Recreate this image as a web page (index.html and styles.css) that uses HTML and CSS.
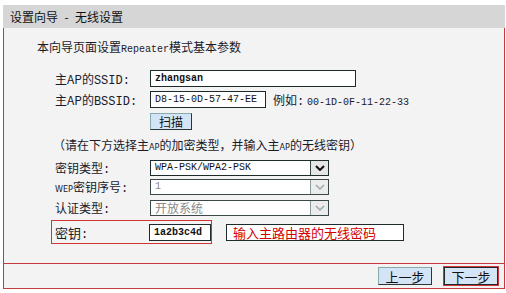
FILE: index.html
```html
<!DOCTYPE html>
<html>
<head>
    <title>设置向导 - 无线设置</title>
    <link rel="stylesheet" href="styles.css">
</head>
<body>
    <div id="wrap">
        <div id="header">设置向导<span class="dash">-</span>无线设置</div>
        <div id="panel">
            <div id="content">
                <div class="intro">本向导页面设置<span class="mono">Repeater</span>模式基本参数</div>

                <div class="row row-ssid">
                    <label class="lbl">主AP的<span class="mono-lbl">SSID:</span></label>
                    <div class="input input-wide mono bold">zhangsan</div>
                </div>
                <div class="row row-bssid">
                    <label class="lbl">主AP的<span class="mono-lbl">BSSID:</span></label>
                    <div class="input input-mac mono">D8-15-0D-57-47-EE</div>
                    <span class="example">例如<span class="mono-lbl">:</span> <span class="mono">00-1D-0F-11-22-33</span></span>
                </div>
                <div class="row row-scan">
                    <span class="lbl"></span>
                    <button class="btn btn-scan">扫描</button>
                </div>

                <div class="note">（请在下方选择主<span class="small">AP</span>的加密类型，并输入主<span class="small">AP</span>的无线密钥）</div>

                <div class="row row-sel1">
                    <label class="lbl">密钥类型<span class="mono-lbl">:</span></label>
                    <div class="select mono">
                        <span class="val">WPA-PSK/WPA2-PSK</span>
                        <span class="arrow"><svg width="10" height="6" viewBox="0 0 10 6"><path d="M1 1 L5 5 L9 1" fill="none" stroke="#111" stroke-width="2"/></svg></span>
                    </div>
                </div>
                <div class="row row-sel2">
                    <label class="lbl"><span class="small">WEP</span>密钥序号<span class="mono-lbl">:</span></label>
                    <div class="select disabled mono">
                        <span class="val">1</span>
                        <span class="arrow"><svg width="10" height="6" viewBox="0 0 10 6"><path d="M1 1 L5 5 L9 1" fill="none" stroke="#9aa" stroke-width="1.5"/></svg></span>
                    </div>
                </div>
                <div class="row row-sel3">
                    <label class="lbl">认证类型<span class="mono-lbl">:</span></label>
                    <div class="select disabled">
                        <span class="val">开放系统</span>
                        <span class="arrow"><svg width="10" height="6" viewBox="0 0 10 6"><path d="M1 1 L5 5 L9 1" fill="none" stroke="#9aa" stroke-width="1.5"/></svg></span>
                    </div>
                </div>
                <div class="row row-key">
                    <div class="keybox">
                        <label class="lbl lbl-key">密钥<span class="mono-lbl">:</span></label>
                        <div class="input input-key mono bold">1a2b3c4d</div>
                    </div>
                    <div class="hint">输入主路由器的无线密码</div>
                </div>
            </div>
            <div id="footer">
                <button class="btn btn-nav">上一步</button>
                <button class="btn btn-nav btn-next">下一步</button>
            </div>
        </div>
    </div>
</body>
</html>
```

FILE: styles.css
```css
body {
    margin: 0;
    background: #ffffff;
    font-family: "Noto Sans CJK SC", "DejaVu Sans", sans-serif;
    font-size: 12px;
    color: #1a1a2a;
}

.mono {
    font-family: "Liberation Mono", "Noto Sans CJK SC", monospace;
    font-size: 10px;
}

.mono-lbl {
    font-family: "Liberation Mono", "Noto Sans CJK SC", monospace;
    font-size: 12px;
}

.small {
    font-family: "DejaVu Sans Condensed", "Liberation Sans", sans-serif;
    font-size: 9px;
}

.bold {
    font-weight: bold;
}

#wrap {
    padding: 5px 1px 0 3px;
}

#header {
    height: 23px;
    line-height: 23px;
    background-color: #d6d6d6;
    padding-left: 7px;
    font-size: 12px;
    color: #111;
}

.dash {
    display: inline-block;
    width: 17px;
    text-align: center;
}

#panel {
    background-color: #f3f3f3;
    border: 1px solid #c43a3f;
    border-top: none;
}

#content {
    height: 235px;
    padding-left: 51px;
    border-bottom: 1px solid #c43a3f;
}

.intro {
    height: 18px;
    line-height: 18px;
    padding-top: 10px;
    margin-left: -18px;
}

.row {
    display: flex;
    align-items: center;
}

.lbl {
    width: 95px;
    flex-shrink: 0;
}

.input {
    box-sizing: border-box;
    height: 17px;
    line-height: 15px;
    border: 1px solid #1d2b2b;
    background: #ffffff;
    padding-left: 4px;
    color: #111;
    white-space: nowrap;
    overflow: hidden;
}

.input-wide {
    width: 206px;
}

.input-mac {
    width: 116px;
}

.example {
    margin-left: 7px;
}

.row-ssid {
    margin-top: 14px;
    height: 17px;
}

.row-bssid {
    margin-top: 4px;
    height: 17px;
}

.row-scan {
    margin-top: 5px;
    height: 17px;
}

.btn {
    box-sizing: border-box;
    background-color: #d4e4f7;
    border: 1px solid #2b3535;
    border-top-color: #8aa;
    border-left-color: #8aa;
    font-family: "Noto Sans CJK SC", sans-serif;
    font-size: 12px;
    color: #111;
    padding: 0;
    cursor: pointer;
}

.btn-scan {
    width: 42px;
    height: 17px;
    line-height: 14px;
}

.note {
    margin-top: 6px;
    height: 18px;
    line-height: 18px;
    margin-left: -2px;
}

.row-sel1 {
    margin-top: 6px;
    height: 16px;
}

.row-sel2 {
    margin-top: 3px;
    height: 16px;
}

.row-sel3 {
    margin-top: 5px;
    height: 16px;
}

.select {
    box-sizing: border-box;
    width: 179px;
    height: 16px;
    border: 1px solid #1d2b2b;
    background: #ffffff;
    display: flex;
    align-items: center;
    justify-content: space-between;
    color: #111;
}

.select .val {
    padding-left: 4px;
    line-height: 14px;
}

.select.disabled {
    border-color: #3a4848;
}

.select.disabled .val {
    color: #8a8a8a;
}

.arrow {
    box-sizing: border-box;
    width: 18px;
    height: 14px;
    background: #e6e6e6;
    border-left: 1px solid #3a4545;
    display: flex;
    align-items: center;
    justify-content: center;
}

.disabled .arrow {
    background: #ececec;
    border-left-color: #8a9a9a;
}

.row-key {
    margin-top: 4px;
    height: 24px;
}

.keybox {
    box-sizing: border-box;
    display: flex;
    align-items: center;
    height: 24px;
    width: 161px;
    margin-left: -4px;
    border: 1px solid #d03438;
}

.lbl-key {
    width: 94px;
    padding-left: 3px;
    font-size: 13px;
}

.input-key {
    width: 62px;
    height: 17px;
}

.hint {
    box-sizing: border-box;
    margin-left: 14px;
    width: 178px;
    height: 17px;
    line-height: 15px;
    border: 1px solid #1d2b2b;
    background: #ffffff;
    color: #d40000;
    font-size: 13px;
    padding-left: 6px;
    white-space: nowrap;
}

#footer {
    height: 24px;
    display: flex;
    justify-content: flex-end;
    align-items: center;
    padding-right: 6px;
    gap: 12px;
}

.btn-nav {
    width: 54px;
    height: 18px;
    line-height: 15px;
    font-size: 13px;
}

.btn-next {
    border: 1px solid #1d2b2b;
    box-shadow: 0 0 0 1px #d03438;
}
```
